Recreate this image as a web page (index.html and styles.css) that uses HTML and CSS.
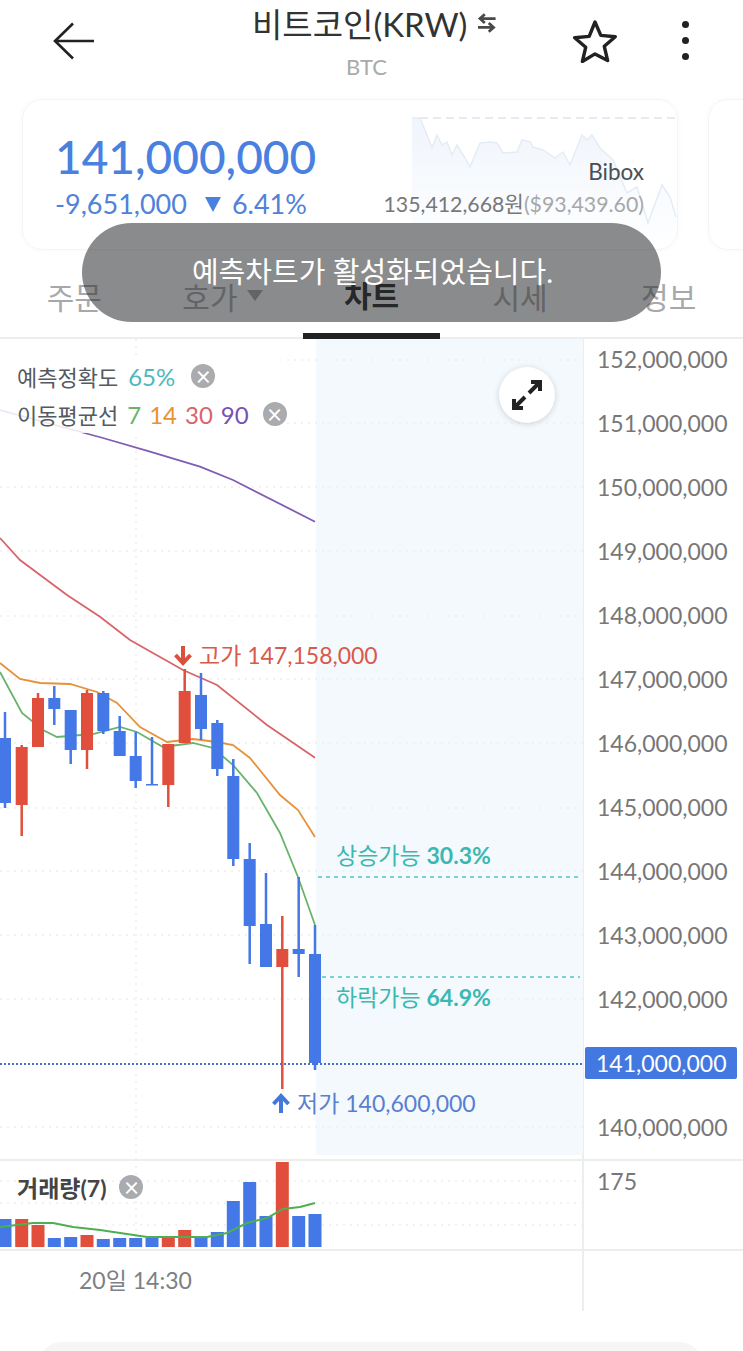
FILE: index.html
```html
<!DOCTYPE html>
<html lang="ko">
<head>
  <meta charset="UTF-8">
  <title>비트코인(KRW) 차트</title>
  <link rel="stylesheet" href="styles.css">
</head>
<body>
  <div class="page">
    <!-- 상단 헤더 -->
    <header class="top-bar">
      <svg class="back-icon" width="42" height="38" viewBox="0 0 42 38"><path d="M41 19H2M20 1.500 2 19l18 17.500" fill="none" stroke="#222" stroke-width="2.600"/></svg>
      <div class="title-box">
        <div class="title-row">
          <span class="title">비트코인(KRW)</span>
          <svg width="20" height="20" viewBox="0 0 20 20"><path d="M19 5.500H3M8 1 3 5.500 8 10M1 14.500h16M12 10l5 4.500L12 19" fill="none" stroke="#4a4a4a" stroke-width="2.800"/></svg>
        </div>
        <div class="symbol">BTC</div>
      </div>
      <svg class="star-icon" width="46" height="44" viewBox="0 0 46 44"><path d="M23 3l5.800 13.400 14.500 1.300-11 9.600 3.300 14.200L23 34.900 10.400 42.500l3.300-14.200-11-9.600 14.500-1.300z" fill="none" stroke="#222" stroke-width="3.400" stroke-linejoin="round"/></svg>
      <div class="more-icon"><i></i><i></i><i></i></div>
    </header>

    <!-- 가격 카드 -->
    <section class="cards">
      <div class="card">
        <div class="price-box">
          <div class="price">141,000,000</div>
          <div class="change"><span>-9,651,000</span><span class="down-mark"></span><span>6.41%</span></div>
        </div>
        <svg class="spark" width="266" height="132" viewBox="412 117 266 132">
          <defs>
            <linearGradient id="sparkFill" x1="0" y1="0" x2="0" y2="1">
              <stop offset="0" stop-color="#f0f5fc"/>
              <stop offset="1" stop-color="#ffffff"/>
            </linearGradient>
          </defs>
          <path d="M412 118L420 118 427 135 432 148 437 135 442 145 447 142 452 155 457 145 465 158 470 167 480 143 490 142 497 143 503 153 517 152 522 140 530 142 533 147 543 150 555 158 563 152 570 165 582 135 587 140 592 135 600 148 613 160 627 193 637 187 648 223 662 185 670 197 676 217V249H412Z" fill="url(#sparkFill)"/>
          <path d="M412 118L420 118 427 135 432 148 437 135 442 145 447 142 452 155 457 145 465 158 470 167 480 143 490 142 497 143 503 153 517 152 522 140 530 142 533 147 543 150 555 158 563 152 570 165 582 135 587 140 592 135 600 148 613 160 627 193 637 187 648 223 662 185 670 197 676 217" fill="none" stroke="#e4ecf6" stroke-width="1.500"/>
          <path d="M420 118H678" stroke="#dbe5f0" stroke-width="1.500" stroke-dasharray="8 5"/>
        </svg>
        <div class="exchange-box">
          <div class="exchange">Bibox</div>
          <div class="exchange-price">135,412,668원<span class="usd">($93,439.60)</span></div>
        </div>
      </div>
      <div class="card card-next">
        <div class="price-box">
          <div class="price">1</div>
          <div class="change"><span>-</span></div>
        </div>
      </div>
    </section>

    <!-- 탭 -->
    <nav class="tabs">
      <div class="tab">주문</div>
      <div class="tab">호가<span class="tab-caret"></span></div>
      <div class="tab active">차트</div>
      <div class="tab">시세</div>
      <div class="tab">정보</div>
    </nav>

    <!-- 메인 차트 -->
    <section class="chart-row chart-main">
      <div class="plot">
        <svg class="plot-svg" width="583" height="820" viewBox="0 339 583 820">
          <rect class="forecast-bg" x="316" y="339" width="267" height="816"/>
          <path class="grid" d="M0 360H583M0 423H583M0 487H583M0 551H583M0 616H583M0 679H583M0 743H583M0 808H583M0 871H583M0 935H583M0 999H583M0 1127H583M136 339V1159"/>

          <path class="ma ma90" d="M0 410L103 438 150 451.700 200 466.700 233 480 315 521.700"/>
          <path class="ma ma30" d="M0 538L20 560 67 595 100 616.700 130 640 183 670 217 685 267 725 315 757.700"/>
          <path class="ma ma14" d="M0 663L20 679 40 683 70 684 97 692 117 703 140 727 167 742 193 739 217 742 233 745 250 758 280 795 298 810 315 837"/>
          <path class="ma ma7" d="M0 672L22 713 43 730 57 737 93 734 120 727 137 732 163 747 193 743 213 748 233 765 257 793 280 833 298 877 315 925"/>

          <g class="candles fall">
            <path d="M5 712V808M54.300 686V725M70.700 710V764M103.300 691V734M119.700 716V756M135.700 732V788M152 737V785M201 673V740M217.300 720V776M233.300 759V866M249.700 843V964M266 873V967M298.700 877V977M315 925V1070"/>
            <rect x="-1" y="738" width="12" height="65"/>
            <rect x="48.300" y="698" width="12" height="11"/>
            <rect x="64.700" y="710" width="12" height="40"/>
            <rect x="97.300" y="693" width="12" height="38"/>
            <rect x="113.700" y="731" width="12" height="25"/>
            <rect x="129.700" y="756" width="12" height="25"/>
            <rect x="146" y="784" width="12" height="1.500"/>
            <rect x="195" y="695" width="12" height="34"/>
            <rect x="211.300" y="723" width="12" height="46"/>
            <rect x="227.300" y="776" width="12" height="83"/>
            <rect x="243.700" y="859" width="12" height="67"/>
            <rect x="260" y="924" width="12" height="43"/>
            <rect x="292.700" y="949" width="12" height="5"/>
            <rect x="309" y="954" width="12" height="109"/>
          </g>
          <g class="candles rise">
            <path d="M21.700 745V836M38 693V747M87 690V769M168.300 744V807M184.700 669V743M282.300 916V1089"/>
            <rect x="15.700" y="747" width="12" height="58"/>
            <rect x="32" y="698" width="12" height="49"/>
            <rect x="81" y="693" width="12" height="57"/>
            <rect x="162.300" y="744" width="12" height="41"/>
            <rect x="178.700" y="691" width="12" height="52"/>
            <rect x="276.300" y="949" width="12" height="18"/>
          </g>

          <path class="guide" d="M318 877H580M322 977H580"/>
          <path class="now-line" d="M0 1064H583"/>
          <path class="mark-high" d="M183 646V663M175.500 655l7.500 8 7.500-8"/>
          <path class="mark-low" d="M281 1113V1096M273.500 1104l7.500-8 7.500 8"/>
        </svg>

        <div class="legend">
          <div class="legend-row">
            <span>예측정확도</span><span class="c-acc">65%</span><span class="close-btn">×</span>
          </div>
          <div class="legend-row legend-ma">
            <span class="legend-name">이동평균선</span><span class="c7">7</span><span class="c14">14</span><span class="c30">30</span><span class="c90">90</span><span class="close-btn">×</span>
          </div>
        </div>

        <div class="expand-btn">
          <svg width="32" height="32" viewBox="0 0 32 32"><path d="M20 3h9v9M29 3 18 14M12 29H3v-9M3 29l11-11" fill="none" stroke="#222" stroke-width="4"/></svg>
        </div>

        <div class="chart-label label-high">고가 147,158,000</div>
        <div class="chart-label label-low">저가 140,600,000</div>
        <div class="chart-label label-up">상승가능 <b>30.3%</b></div>
        <div class="chart-label label-drop">하락가능 <b>64.9%</b></div>
      </div>
      <div class="axis">
        <span>152,000,000</span>
        <span>151,000,000</span>
        <span>150,000,000</span>
        <span>149,000,000</span>
        <span>148,000,000</span>
        <span>147,000,000</span>
        <span>146,000,000</span>
        <span>145,000,000</span>
        <span>144,000,000</span>
        <span>143,000,000</span>
        <span>142,000,000</span>
        <span class="now-tag">141,000,000</span>
        <span>140,000,000</span>
      </div>
    </section>

    <!-- 거래량 -->
    <section class="chart-row chart-vol">
      <div class="plot">
        <svg class="plot-svg" width="583" height="90" viewBox="0 1159 583 90">
          <path class="grid" d="M0 1181H583M0 1203H583M0 1225H583M136 1159V1248"/>
          <g class="bars fall">
            <rect x="-1.500" y="1219" width="13" height="28"/>
            <rect x="47.800" y="1238" width="13" height="9"/>
            <rect x="64.200" y="1237" width="13" height="10"/>
            <rect x="96.800" y="1239" width="13" height="8"/>
            <rect x="113.200" y="1238" width="13" height="9"/>
            <rect x="129.200" y="1238" width="13" height="9"/>
            <rect x="145.500" y="1238" width="13" height="9"/>
            <rect x="194.500" y="1237" width="13" height="10"/>
            <rect x="210.800" y="1232" width="13" height="15"/>
            <rect x="226.800" y="1201" width="13" height="46"/>
            <rect x="243.200" y="1182" width="13" height="65"/>
            <rect x="259.500" y="1216" width="13" height="31"/>
            <rect x="292.200" y="1216" width="13" height="31"/>
            <rect x="308.500" y="1214" width="13" height="33"/>
          </g>
          <g class="bars rise">
            <rect x="15.200" y="1219" width="13" height="28"/>
            <rect x="31.500" y="1225" width="13" height="22"/>
            <rect x="80.500" y="1235" width="13" height="12"/>
            <rect x="161.800" y="1238" width="13" height="9"/>
            <rect x="178.200" y="1230" width="13" height="17"/>
            <rect x="275.800" y="1162" width="13" height="85"/>
          </g>
          <path class="ma vol-ma" d="M0 1227L33 1223 53 1223 73 1227 100 1230 147 1237 173 1237 207 1237 227 1233 247 1223 267 1218 283 1209 300 1207 315 1203"/>
        </svg>
        <div class="vol-legend"><b>거래량(7)</b><span class="close-btn">×</span></div>
      </div>
      <div class="axis vol-axis"><span>175</span></div>
    </section>

    <!-- 시간축 -->
    <section class="chart-row chart-time">
      <div class="time-box"><span>20일 14:30</span></div>
      <div class="time-rest"></div>
    </section>

    <div class="bottom-card"></div>

    <div class="toast">예측차트가 활성화되었습니다.</div>
  </div>
</body>
</html>
```

FILE: styles.css
```css
* {
  box-sizing: border-box;
}
html, body {
  margin: 0;
  background: #fff;
}
body {
  font-family: Lato, "Noto Sans CJK KR", sans-serif;
  color: #333;
}
.page {
  position: relative;
  width: 743px;
  height: 1351px;
  overflow: hidden;
}

/* header */
.top-bar {
  height: 99px;
  display: flex;
  align-items: flex-start;
  padding-left: 53px;
}
.back-icon {
  flex: none;
  margin-top: 22px;
}
.title-box {
  flex: none;
  width: 245px;
  margin-left: 157px;
}
.title-row {
  display: flex;
  align-items: center;
  gap: 10px;
  height: 30px;
  margin-top: 8px;
}
.title {
  font-size: 33px;
  color: #333;
  white-space: nowrap;
}
.symbol {
  margin-top: 17px;
  padding-left: 94px;
  font-size: 22px;
  line-height: 24px;
  color: #aaa;
}
.star-icon {
  flex: none;
  margin-left: 75px;
  margin-top: 19px;
}
.more-icon {
  display: flex;
  flex-direction: column;
  gap: 9px;
  margin-left: 64px;
  margin-top: 21px;
}
.more-icon i {
  display: block;
  width: 7px;
  height: 7px;
  border-radius: 50%;
  background: #222;
}

/* cards */
.cards {
  display: flex;
  gap: 30px;
  padding-left: 22px;
  height: 151px;
}
.card {
  position: relative;
  flex: none;
  width: 656px;
  height: 151px;
  border: 1px solid #f3f4f6;
  border-radius: 20px;
  box-shadow: 0 0 6px rgba(0, 0, 0, 0.03);
  padding: 29px 0 0 32px;
  overflow: hidden;
}
.card-next {
  width: 200px;
  padding-left: 33px;
}
.price {
  font-size: 46px;
  line-height: 56px;
  font-weight: 500;
  color: #4a80e0;
  white-space: nowrap;
}
.change {
  display: flex;
  align-items: center;
  font-size: 27px;
  line-height: 32px;
  margin-top: 3px;
  color: #4f82d8;
  white-space: nowrap;
}
.down-mark {
  width: 0;
  height: 0;
  margin: 0 11px 0 18px;
  border-left: 8.500px solid transparent;
  border-right: 8.500px solid transparent;
  border-top: 15px solid #4a80e0;
}
.spark {
  position: absolute;
  left: 389px;
  top: 17px;
}
.exchange-box {
  position: absolute;
  right: 33px;
  top: 57px;
  text-align: right;
}
.exchange {
  font-size: 22.500px;
  line-height: 30px;
  color: #4a4e55;
}
.exchange-price {
  font-size: 21.300px;
  line-height: 30px;
  margin-top: 2px;
  color: #777;
  white-space: nowrap;
}
.usd {
  color: #a5a7ab;
}

/* tabs */
.tabs {
  display: grid;
  grid-template-columns: repeat(5, 1fr);
  height: 89px;
  border-bottom: 2px solid #eceded;
}
.tab {
  display: flex;
  align-items: center;
  justify-content: center;
  padding-top: 4px;
  font-size: 30px;
  color: #a6a8ac;
}
.tab-caret {
  width: 0;
  height: 0;
  margin-left: 10px;
  border-left: 8px solid transparent;
  border-right: 8px solid transparent;
  border-top: 11px solid #a6a8ac;
}
.tab.active {
  margin: 0 6px -2px;
  border-bottom: 6px solid #222;
  color: #222;
  font-weight: 700;
}

/* chart */
.chart-row {
  display: flex;
}
.plot {
  position: relative;
  flex: none;
  width: 584px;
  border-right: 2px solid #eceded;
}
.plot-svg {
  display: block;
}
.chart-main {
  height: 820px;
}
.forecast-bg {
  fill: #f3f9fd;
}
.grid {
  fill: none;
  stroke: #eeeeee;
  stroke-width: 1.500;
  stroke-dasharray: 2 5;
}
.ma {
  fill: none;
  stroke-width: 1.800;
}
.ma90 { stroke: #7f5db5; }
.ma30 { stroke: #d9646a; }
.ma14 { stroke: #e69238; }
.ma7 { stroke: #69b46c; }
.candles path {
  fill: none;
  stroke-width: 2.500;
}
.candles.fall path { stroke: #4378e6; }
.candles.rise path { stroke: #e14e3b; }
.candles.fall rect, .bars.fall rect { fill: #4378e6; }
.candles.rise rect, .bars.rise rect { fill: #e14e3b; }
.guide {
  fill: none;
  stroke: #55c4c2;
  stroke-width: 1.500;
  stroke-dasharray: 4 4;
}
.now-line {
  fill: none;
  stroke: #4a6fc8;
  stroke-width: 2;
  stroke-dasharray: 2 2;
}
.mark-high, .mark-low {
  fill: none;
  stroke-width: 4;
}
.mark-high { stroke: #dc4f3c; }
.mark-low { stroke: #4378d8; }

.legend {
  position: absolute;
  left: 0;
  top: 18px;
  display: flex;
  flex-direction: column;
}
.legend-row {
  display: flex;
  align-items: center;
  height: 38px;
  padding-left: 17px;
  font-size: 22px;
  color: #555a60;
  gap: 10px;
  background: rgba(255, 255, 255, 0.85);
}
.legend-row span:not(:nth-child(1)):not(.close-btn) {
  font-size: 24px;
}
.legend-ma {
  gap: 8px;
}
.legend-name {
  margin-right: 1px;
}
.c-acc { color: #4fb8bc; }
.c7 { color: #69b46c; }
.c14 { color: #e69238; }
.c30 { color: #d9646a; }
.c90 { color: #7353b5; }
.close-btn {
  display: flex;
  align-items: center;
  justify-content: center;
  width: 24px;
  height: 24px;
  margin-left: 6px;
  border-radius: 50%;
  background: #a9abaf;
  color: #fff;
  font-size: 26px;
  line-height: 24px;
}
.expand-btn {
  position: absolute;
  left: 499px;
  top: 28px;
  width: 56px;
  height: 56px;
  border-radius: 50%;
  background: #fff;
  box-shadow: 0 1px 6px rgba(0, 0, 0, 0.16);
  display: flex;
  align-items: center;
  justify-content: center;
}
.chart-label {
  position: absolute;
  font-size: 23px;
  line-height: 30px;
  white-space: nowrap;
}
.chart-label b {
  font-weight: 700;
}
.label-high { left: 199px; top: 301px; color: #d9594a; }
.label-low { left: 297px; top: 749px; color: #5a7fd0; }
.label-up { left: 336px; top: 501px; color: #3bb8b0; }
.label-drop { left: 336px; top: 643px; color: #3bb8b0; }

.axis {
  flex: 1;
  display: flex;
  flex-direction: column;
  padding: 4px 0 0 13px;
  font-size: 23px;
  color: #777;
  overflow: hidden;
}
.axis span {
  flex: none;
  height: 64px;
  line-height: 32px;
  white-space: nowrap;
}
.axis .now-tag {
  align-self: flex-start;
  width: 152px;
  height: 32px;
  margin: 0 0 32px -12px;
  padding-left: 11px;
  background: #4378e0;
  color: #fff;
  border-radius: 2px;
}

.chart-vol {
  height: 90px;
  border-top: 2px solid #eceded;
}
.chart-vol .plot-svg {
  margin-top: -2px;
}
.vol-legend {
  position: absolute;
  left: 17px;
  top: 9px;
  display: flex;
  align-items: center;
  gap: 6px;
  font-size: 23px;
  color: #444;
}
.vol-legend .close-btn {
  margin-left: 7px;
}
.vol-axis {
  padding-top: 4px;
}
.vol-ma {
  stroke: #4caf50;
  stroke-width: 2;
}
.chart-time {
  height: 62px;
  border-top: 2px solid #eceded;
}
.time-box {
  flex: none;
  width: 584px;
  border-right: 2px solid #eceded;
  padding: 13px 0 0 79px;
  font-size: 23px;
  line-height: 32px;
  color: #7c8087;
}
.time-rest {
  flex: 1;
}
.bottom-card {
  height: 60px;
  margin: 31px 40px 0 38px;
  border-radius: 24px 24px 0 0;
  background: #f6f6f7;
}

/* toast */
.toast {
  position: absolute;
  left: 82px;
  top: 223px;
  width: 579px;
  height: 99px;
  border-radius: 50px;
  background: rgba(42, 43, 46, 0.55);
  color: #fff;
  font-size: 29px;
  text-align: center;
  padding-top: 31px;
  line-height: 36px;
  padding-left: 2px;
}
```
